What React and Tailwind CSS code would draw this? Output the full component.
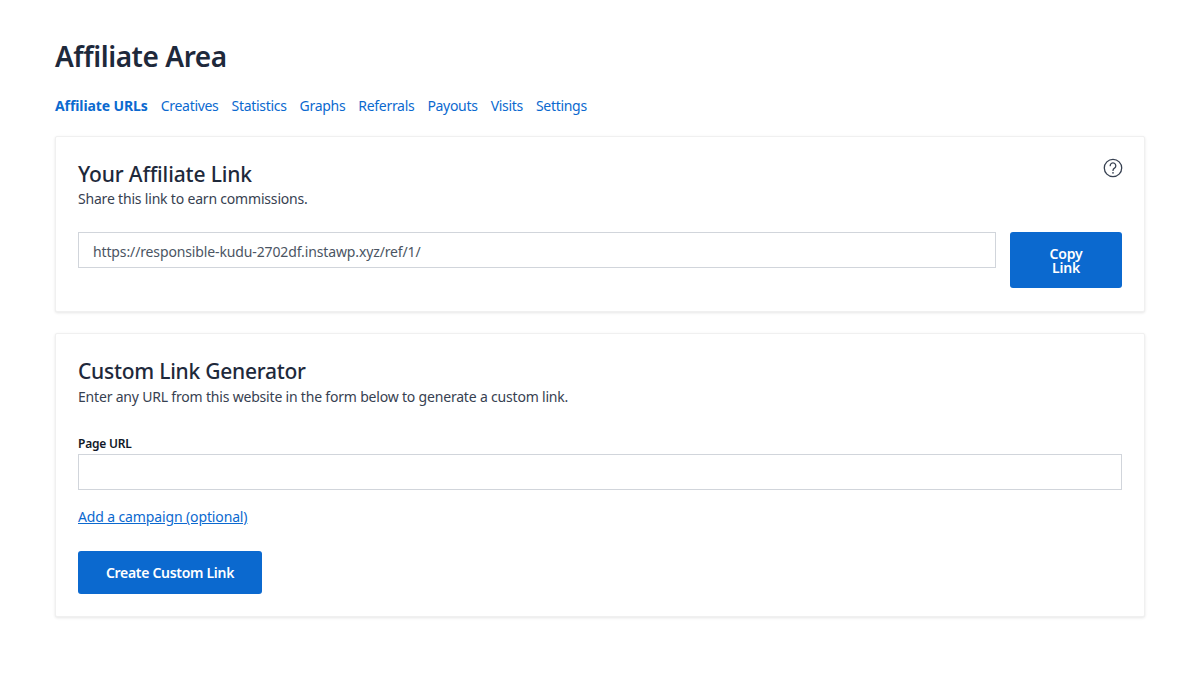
import React from "react";

const tabs = ["Creatives", "Statistics", "Graphs", "Referrals", "Payouts", "Visits", "Settings"];

function HelpIcon() {
  return (
    <svg width="20" height="20" viewBox="0 0 20 20" fill="none" stroke="#374151" strokeWidth="1.3" className="overflow-visible">
      <g transform="translate(1 -1)">
        <circle cx="10" cy="10" r="8.7" />
        <path d="M7.2 7.7a2.8 2.8 0 1 1 4.3 2.4c-1 .6-1.5 1.1-1.5 2.3" strokeLinecap="round" />
        <circle cx="10" cy="14.8" r="0.85" fill="#374151" stroke="none" />
      </g>
    </svg>
  );
}

export default function App() {
  return (
    <div className="min-h-[677px] bg-white px-[55px] font-['Noto_Sans',sans-serif] text-[#1f2937]">
      <h1 className="pt-[36px] text-[28px] leading-[40px] font-semibold text-[#1e293b] tracking-[-0.45px]">Affiliate Area</h1>

      {/* Tabs */}
      <nav className="mt-[20px] flex h-[20px] items-center gap-[13px] text-[14px] leading-[20px] tracking-[-0.3px] text-[#0b69cf]">
        <a className="font-bold tracking-[-0.1px]">Affiliate URLs</a>
        {tabs.map((t) => (
          <a key={t}>{t}</a>
        ))}
      </nav>

      {/* Affiliate link card */}
      <section className="mt-[20px] h-[176px] rounded-[2px] border border-[#f0f0f0] bg-white px-[22px] pt-[22px] shadow-[0_1px_3px_rgba(0,0,0,0.1)]">
        <div className="flex items-start justify-between">
          <div>
            <h2 className="text-[21px] leading-[30px] font-medium text-[#1e293b] tracking-[-0.15px]">Your Affiliate Link</h2>
            <p className="text-[14px] leading-[20px] tracking-[-0.19px] text-[#374151]">Share this link to earn commissions.</p>
          </div>
          <HelpIcon />
        </div>
        <div className="mt-[23px] flex items-start gap-[14px]">
          <div className="flex h-[36px] flex-1 items-center border border-[#d1d5db] px-[14px] pt-[2px] text-[14px] tracking-[-0.13px] text-[#4b5563]">
            https://responsible-kudu-2702df.instawp.xyz/ref/1/
          </div>
          <button className="flex h-[56px] w-[112px] items-center justify-center rounded-[3px] bg-[#0b69cf] px-8 pt-[2px] text-center text-[14px] leading-[14px] font-semibold tracking-[-0.2px] text-white">
            Copy Link
          </button>
        </div>
      </section>

      {/* Custom link card */}
      <section className="mt-[21px] h-[284px] rounded-[2px] border border-[#f0f0f0] bg-white px-[22px] pt-[22px] shadow-[0_1px_3px_rgba(0,0,0,0.1)]">
        <h2 className="text-[21px] leading-[30px] font-medium text-[#1e293b] tracking-[-0.25px]">Custom Link Generator</h2>
        <p className="mt-[1px] text-[14px] leading-[20px] tracking-[-0.19px] text-[#374151]">Enter any URL from this website in the form below to generate a custom link.</p>
        <label className="mt-[28px] block text-[12px] leading-[18px] font-semibold tracking-[-0.2px] text-[#111827]">Page URL</label>
        <div className="mt-[1px] h-[36px] border border-[#d1d5db]" />
        <a className="mt-[17px] block text-[14px] leading-[20px] tracking-[-0.13px] text-[#0b69cf] underline">Add a campaign (optional)</a>
        <button className="mt-[24px] block h-[43px] w-[184px] rounded-[3px] bg-[#0b69cf] text-[14px] font-semibold tracking-[-0.3px] text-white">
          Create Custom Link
        </button>
      </section>
    </div>
  );
}
